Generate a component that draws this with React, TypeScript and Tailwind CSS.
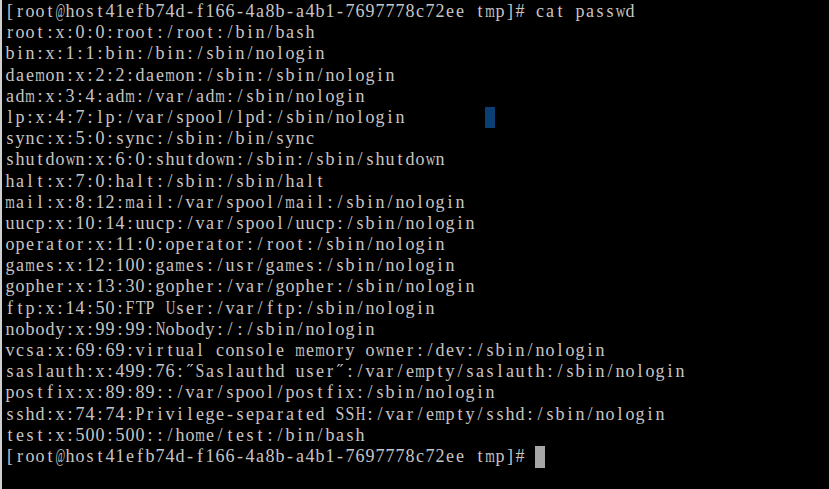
import React from "react";

const lines: string[] = [
  "[root@host41efb74d-f166-4a8b-a4b1-7697778c72ee tmp]# cat passwd",
  "root:x:0:0:root:/root:/bin/bash",
  "bin:x:1:1:bin:/bin:/sbin/nologin",
  "daemon:x:2:2:daemon:/sbin:/sbin/nologin",
  "adm:x:3:4:adm:/var/adm:/sbin/nologin",
  "lp:x:4:7:lp:/var/spool/lpd:/sbin/nologin",
  "sync:x:5:0:sync:/sbin:/bin/sync",
  "shutdown:x:6:0:shutdown:/sbin:/sbin/shutdown",
  "halt:x:7:0:halt:/sbin:/sbin/halt",
  "mail:x:8:12:mail:/var/spool/mail:/sbin/nologin",
  "uucp:x:10:14:uucp:/var/spool/uucp:/sbin/nologin",
  "operator:x:11:0:operator:/root:/sbin/nologin",
  "games:x:12:100:games:/usr/games:/sbin/nologin",
  "gopher:x:13:30:gopher:/var/gopher:/sbin/nologin",
  "ftp:x:14:50:FTP User:/var/ftp:/sbin/nologin",
  "nobody:x:99:99:Nobody:/:/sbin/nologin",
  "vcsa:x:69:69:virtual console memory owner:/dev:/sbin/nologin",
  'saslauth:x:499:76:"Saslauthd user":/var/empty/saslauth:/sbin/nologin',
  "postfix:x:89:89::/var/spool/postfix:/sbin/nologin",
  "sshd:x:74:74:Privilege-separated SSH:/var/empty/sshd:/sbin/nologin",
  "test:x:500:500::/home/test:/bin/bash",
];

function Glyph({ c }: { c: string }) {
  if (c === " ") return <span className="inline-block w-[10px] shrink-0" />;
  let inner: React.ReactNode = c;
  if (c === "m") inner = <span className="inline-block scale-x-[0.68]">m</span>;
  else if (c === "w") inner = <span className="inline-block scale-x-[0.74]">w</span>;
  else if (c === "@") inner = <span className="inline-block scale-x-[0.58]">@</span>;
  else if (c === "H" || c === "U" || c === "N") inner = <span className="inline-block scale-x-[0.74]">{c}</span>;
  else if (c === "F" || c === "T" || c === "P" || c === "S") inner = <span className="inline-block scale-x-[0.88]">{c}</span>;
  else if (c === '"') inner = <span className="inline-block">{"\u02dd"}</span>;
  return (
    <span className="inline-flex justify-center w-[10px] shrink-0">
      {inner}
    </span>
  );
}

function Line({ text }: { text: string }) {
  return (
    <>
      {Array.from(text).map((c, i) => (
        <Glyph key={i} c={c} />
      ))}
    </>
  );
}

export default function App() {
  return (
    <div className="flex w-[829px] h-[489px] bg-black overflow-hidden">
      <div className="w-[2px] h-full bg-[#cfcfcf] shrink-0" />
      <div
        className="flex-1 pl-[3px] pt-[1px] text-[#c6c6c6] text-[18px] whitespace-pre"
        style={{ fontFamily: '"Liberation Serif", "Noto Sans CJK SC", serif' }}
      >
        {lines.map((l, i) => (
          <div key={i} className="h-[21.2px] leading-[21.2px] flex items-start">
            <Line text={l} />
            {i === 5 && (
              <>
                <Line text={"        "} />
                <span className="inline-block w-[10px] h-[21px] bg-[#0b3f73] shrink-0" />
              </>
            )}
          </div>
        ))}
        <div className="h-[21.2px] leading-[21.2px] flex items-start">
          <Line text={"[root@host41efb74d-f166-4a8b-a4b1-7697778c72ee tmp]# "} />
          <span className="inline-block w-[10px] h-[22px] bg-[#a6a6a6] shrink-0" />
        </div>
      </div>
    </div>
  );
}
